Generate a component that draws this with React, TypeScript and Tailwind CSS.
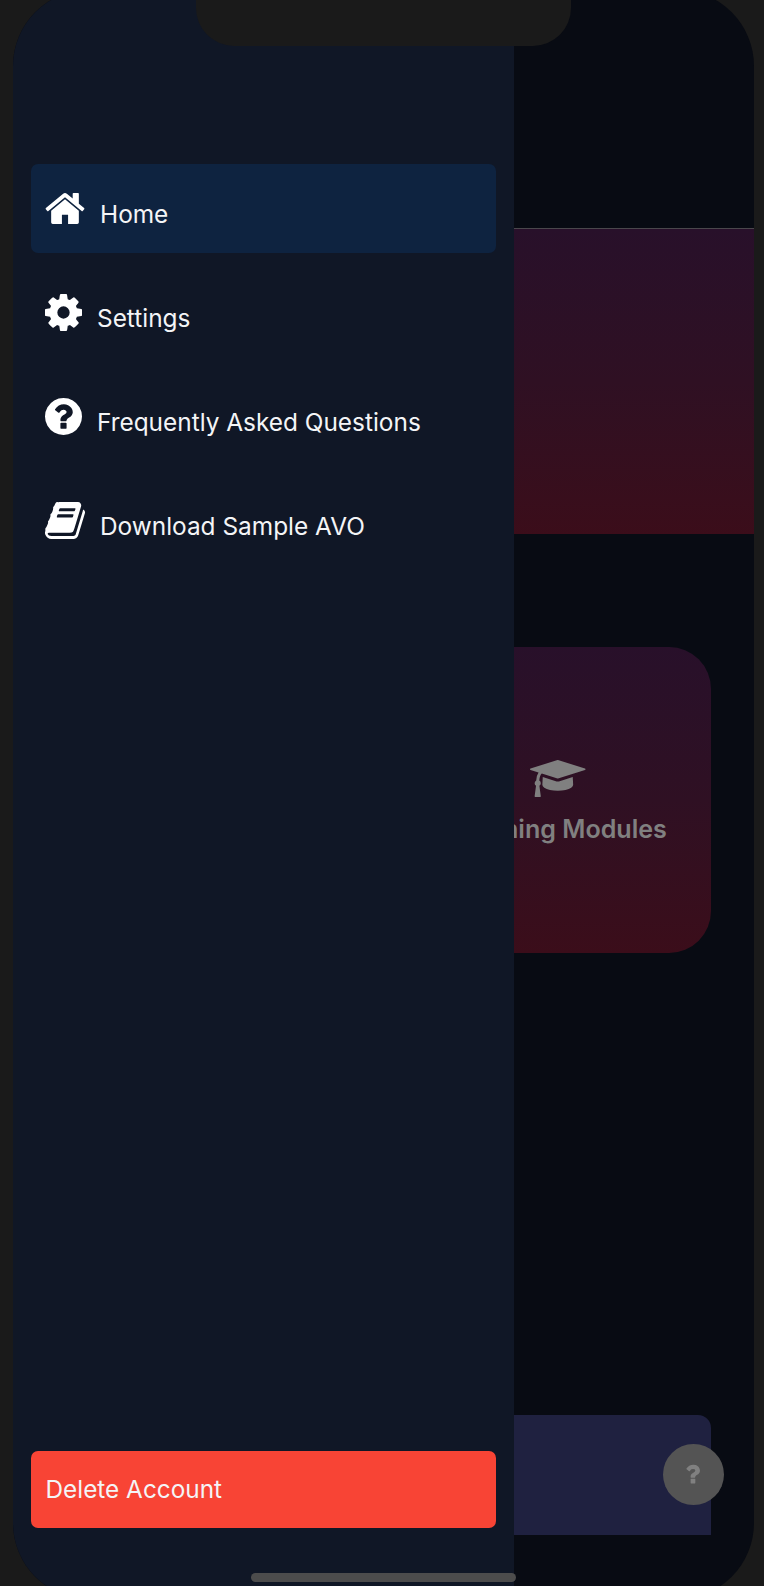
import type { ReactNode } from "react";

type IconProps = { className?: string };

const Glyph = ({ box, d, className }: { box: string; d: string; className?: string }) => (
  <svg viewBox={box} className={className} fill="currentColor" aria-hidden="true">
    <path d={d} />
  </svg>
);

const HomeIcon = ({ className }: IconProps) => (
  <Glyph
    className={className}
    box="64 128 1664 1536"
    d="M1472 992v480q0 26-19 45t-45 19h-384v-384h-256v384h-384q-26 0-45-19t-19-45v-480q0-1 .5-3t.5-3l575-474 575 474q1 2 1 6zm223-69l-62 74q-8 9-21 11h-3q-13 0-21-7l-692-577-692 577q-12 8-24 7-13-2-21-11l-62-74q-8-10-7-23.5t11-21.5l719-599q32-26 76-26t76 26l244 204v-195q0-14 9-23t23-9h192q14 0 23 9t9 23v408l219 182q10 8 11 21.5t-7 23.5z"
  />
);

const CogIcon = ({ className }: IconProps) => (
  <Glyph
    className={className}
    box="128 128 1536 1536"
    d="M1152 896q0-106-75-181t-181-75-181 75-75 181 75 181 181 75 181-75 75-181zm512-109v222q0 12-8 23t-20 13l-185 28q-19 54-39 91 35 50 107 138 10 12 10 25t-9 23q-27 37-99 108t-94 71q-12 0-26-9l-138-108q-44 23-91 38-16 136-29 186-7 28-36 28h-222q-14 0-24.5-8.5t-11.5-21.5l-28-184q-49-16-90-37l-141 107q-10 9-25 9-14 0-25-11-126-114-165-168-7-10-7-23 0-12 8-23 15-21 51-66.5t54-70.5q-27-50-41-99l-183-27q-13-2-21-12.5t-8-23.5v-222q0-12 8-23t19-13l186-28q14-46 39-92-40-57-107-138-10-12-10-24 0-10 9-23 26-36 98.5-107.5t94.5-71.5q13 0 26 10l138 107q44-23 91-38 16-136 29-186 7-28 36-28h222q14 0 24.5 8.5t11.5 21.5l28 184q49 16 90 37l142-107q9-9 24-9 13 0 25 10 129 119 165 170 7 8 7 22 0 12-8 23-15 21-51 66.5t-54 70.5q26 50 41 98l183 28q13 2 21 12.5t8 23.5z"
  />
);

const QuestionCircleIcon = ({ className }: IconProps) => (
  <Glyph
    className={className}
    box="128 128 1536 1536"
    d="M1024 1376v-192q0-14-9-23t-23-9h-192q-14 0-23 9t-9 23v192q0 14 9 23t23 9h192q14 0 23-9t9-23zm256-672q0-88-55.5-163t-138.5-116-170-41q-243 0-371 213-15 24 8 42l132 100q7 6 19 6 16 0 25-12 53-68 86-92 34-24 86-24 48 0 85.5 26t37.5 59q0 38-20 61t-68 45q-63 28-115.5 86.5t-52.5 125.5v36q0 14 9 23t23 9h192q14 0 23-9t9-23q0-19 21.5-49.5t54.5-49.5q32-18 49-28.5t46-35 44.5-48 28-60.5 12.5-81zm384 192q0 209-103 385.5t-279.5 279.5-385.5 103-385.5-103-279.5-279.5-103-385.5 103-385.5 279.5-279.5 385.5-103 385.5 103 279.5 279.5 103 385.5z"
  />
);

const BookIcon = ({ className }: IconProps) => (
  <Glyph
    className={className}
    box="64 128 1664 1536"
    d="M1703 478q40 57 18 129l-275 906q-19 64-76.5 107.5t-122.5 43.5h-923q-77 0-148.5-53.5t-99.5-131.5q-24-67-2-127 0-4 3-27t4-37q1-8-3-21.5t-3-19.5q2-11 8-21t16.5-23.5 16.5-23.5q23-38 45-91.5t30-91.5q3-10 .5-30t-.5-28q3-11 17-28t17-23q21-36 42-92t25-90q1-9-2.5-32t.5-28q4-13 22-30.5t22-22.5q19-26 42.5-84.5t27.5-96.5q1-8-3-25.5t-2-26.5q2-8 9-18t18-23 17-21q8-12 16.5-30.5t15-35 16-36 19.5-32 26.5-23.5 36-11.5 47.5 5.5l-1 3q38-9 51-9h761q74 0 114 56t18 130l-274 906q-36 119-71.5 153.5t-128.5 34.5h-869q-27 0-38 15-11 16-1 43 24 70 144 70h923q29 0 56-15.5t35-41.5l300-987q7-22 5-57 38 15 59 43zm-1064 2q-4 13 2 22.5t20 9.5h608q13 0 25.5-9.5t16.5-22.5l21-64q4-13-2-22.5t-20-9.5h-608q-13 0-25.5 9.5t-16.5 22.5zm-83 256q-4 13 2 22.5t20 9.5h608q13 0 25.5-9.5t16.5-22.5l21-64q4-13-2-22.5t-20-9.5h-608q-13 0-25.5 9.5t-16.5 22.5z"
  />
);

const GraduationCapIcon = ({ className }: IconProps) => (
  <Glyph
    className={className}
    box="0 128 2304 1536"
    d="M1774 836l18 316q4 69-82 128t-235 93.5-323 34.5-323-34.5-235-93.5-82-128l18-316 574 181q22 7 48 7t48-7zm530-324q0 23-22 31l-1120 352q-4 1-10 1t-10-1l-652-206q-43 34-71 111.5t-34 178.5q63 36 63 109 0 69-58 107l58 433q2 14-8 25-9 11-24 11h-192q-15 0-24-11-10-11-8-25l58-433q-58-38-58-107 0-73 65-111 11-207 98-330l-333-104q-22-8-22-31t22-31l1120-352q4-1 10-1t10 1l1120 352q22 8 22 31z"
  />
);

const QuestionIcon = ({ className }: IconProps) => (
  <Glyph
    className={className}
    box="384 256 1024 1280"
    d="M1088 1256v240q0 16-12 28t-28 12h-240q-16 0-28-12t-12-28v-240q0-16 12-28t28-12h240q16 0 28 12t12 28zm316-600q0 54-15.5 101t-35 76.5-55 59.5-57.5 43.5-61 35.5q-41 23-68.5 65t-27.5 67q0 17-12 32.5t-28 15.5h-240q-15 0-25.5-18.5t-10.5-37.5v-45q0-83 65-156.5t143-108.5q59-27 84-56t25-76q0-42-46.5-74t-107.5-32q-65 0-108 29-35 25-107 115-13 16-31 16-12 0-25-8l-164-125q-13-10-15.5-25t5.5-28q160-266 464-266 80 0 161 31t146 83 106 127.5 41 158.5z"
  />
);

function DrawerItem({ icon, label, active = false }: { icon: ReactNode; label: string; active?: boolean }) {
  return (
    <button
      className={
        "flex h-[89px] items-start rounded-[7px] pl-[14px] pt-[26px] text-left " +
        (active ? "bg-[#0e2340]" : "")
      }
    >
      {icon}
      <span className="ml-[15px] mt-[8px] whitespace-nowrap text-[24.4px] leading-[32px]">{label}</span>
    </button>
  );
}

function Drawer() {
  return (
    <aside className="z-10 col-start-1 row-start-1 flex w-[501px] flex-col bg-[#101726] pl-[18px] pr-[18px] pt-[174px] text-[#f4f5f7]">
      <nav className="flex flex-col gap-[15px]">
        <DrawerItem active label="Home" icon={<HomeIcon className="h-[37px] w-[40px] text-white" />} />
        <DrawerItem label="Settings" icon={<CogIcon className="h-[37px] w-[37px] text-white" />} />
        <DrawerItem
          label="Frequently Asked Questions"
          icon={<QuestionCircleIcon className="h-[37px] w-[37px] text-white" />}
        />
        <DrawerItem label="Download Sample AVO" icon={<BookIcon className="h-[37px] w-[40px] text-white" />} />
      </nav>
      <button className="mb-[71px] mt-auto flex h-[77px] items-center rounded-[7px] bg-[#f84435] pl-[14.5px] text-[24.35px]">
        Delete Account
      </button>
    </aside>
  );
}

function HomeScreen() {
  return (
    <main className="col-start-1 row-start-1 flex flex-col bg-[#080b13]">
      <header className="h-[239px] border-b border-[#4a474c]" />
      <section className="h-[305px] bg-linear-to-b from-[#28102a] via-[#2f1023] to-[#3b0d1a]" />
      <section className="mr-[43px] mt-[113px] flex h-[306px] w-[306px] flex-col items-center self-end rounded-[42px] bg-linear-to-b from-[#28102a] via-[#2f1023] to-[#3b0d1a] pt-[112.5px] text-[#808080]">
        <GraduationCapIcon className="h-[37px] w-[55.5px]" />
        <h2 className="mt-[16px] whitespace-nowrap text-[25.1px] font-semibold leading-[32px]">Learning Modules</h2>
      </section>
      <section className="relative mr-[43px] mt-[462px] h-[120px] w-[655px] self-end rounded-t-[13px] bg-[#1f2140]">
        <button className="absolute -right-[12.5px] top-[28.75px] flex size-[61px] items-center justify-center rounded-full bg-[#545454] pb-px pr-px text-[#808080]">
          <QuestionIcon className="h-[20px] w-[15px]" />
        </button>
      </section>
    </main>
  );
}

export default function App() {
  return (
    <div className="relative h-[1586px] w-[764px] overflow-hidden bg-[#1a1a1a] pl-[13px] font-['Inter',sans-serif]">
      <div className="-mt-[10px] grid h-[1609px] w-[741px] grid-cols-1 grid-rows-1 overflow-hidden rounded-[76px]">
        <HomeScreen />
        <Drawer />
      </div>
      <div className="absolute left-[196px] top-0 z-20 h-[45.5px] w-[375px] rounded-b-[38px] bg-[#1a1a1a]" />
      <div className="absolute left-[251px] top-[1573px] z-20 h-[9px] w-[265px] rounded-full bg-[#4c4c4c]" />
    </div>
  );
}
